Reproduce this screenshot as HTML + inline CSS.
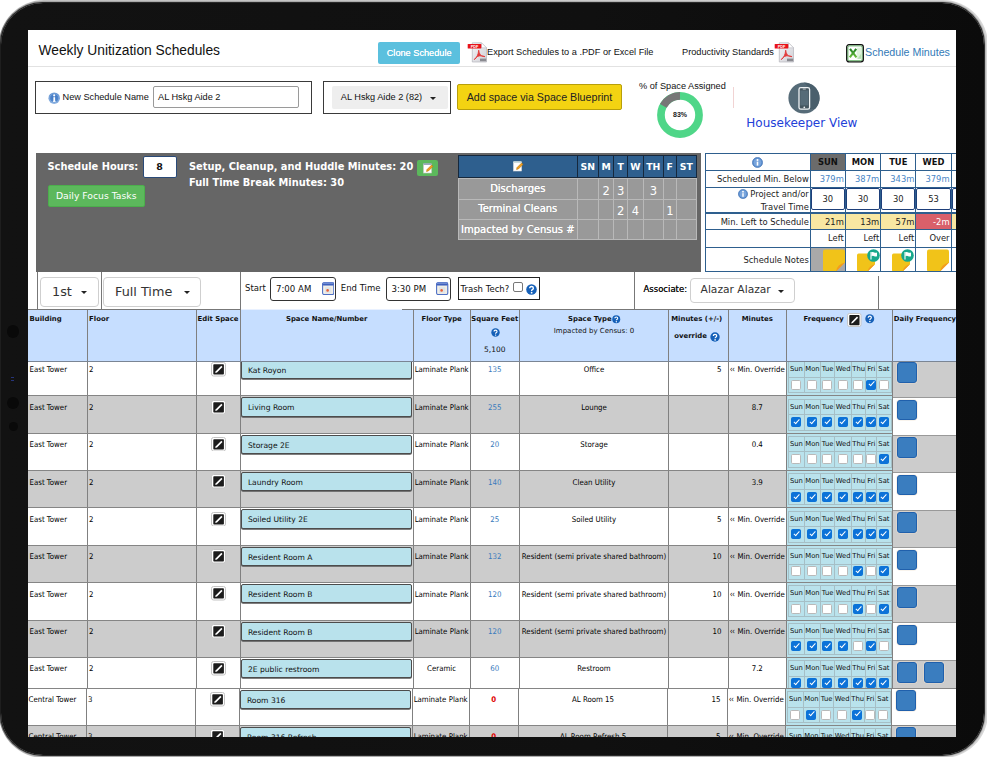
<!DOCTYPE html>
<html lang="en">
<head>
<meta charset="utf-8">
<title>Weekly Unitization Schedules</title>
<style>
html,body{margin:0;padding:0;}
body{width:987px;height:757px;overflow:hidden;background:#fff;position:relative;font-family:"Liberation Sans",sans-serif;color:#222;}
.abs,#inner *{box-sizing:border-box;}
#tablet{position:absolute;left:-1px;top:0;width:988.5px;height:757.5px;border-radius:45px;background:linear-gradient(to right,#777 0,#9a9a9a .5%,#c4c4c4 1.5%,#cdcdcd 50%,#d8d8d8 100%);}
#bezel{position:absolute;left:1.3px;top:3.3px;width:983.2px;height:751.5px;border-radius:42px;background:linear-gradient(to right,#121212 0,#101010 60%,#0b0b0b 100%);box-shadow:0 0 1.3px .4px #0c0c0c;}
#screen{position:absolute;left:28px;top:30px;width:928px;height:707px;overflow:hidden;background:#fff;}
#inner{position:absolute;left:-28px;top:-30px;width:987px;height:757px;}
#inner div,#inner span,#inner svg,#inner i{position:absolute;display:block;}
.dv{font-family:"DejaVu Sans",sans-serif;}
.nw{white-space:nowrap;}
/* top bar */
#title{left:38.5px;top:42px;font-size:13.8px;line-height:17px;color:#111;white-space:nowrap;}
#hr1{left:28px;top:66px;width:928px;height:1px;background:#e2e2e2;}
#clone{left:378.4px;top:41.5px;width:81.5px;height:22px;text-shadow:0 0 .4px #fff;background:#5bc0de;border-radius:2px;color:#fff;font-size:9.2px;line-height:22px;text-align:center;white-space:nowrap;}
.t9{font-size:9.2px;line-height:12px;white-space:nowrap;color:#111;}
#schedmin{left:865px;top:45.5px;font-size:10.7px;line-height:13px;color:#337ab7;white-space:nowrap;}
/* row 2 */
.box{border:1.5px solid #3a3a3a;background:#fff;}
#nsn-input{left:153px;top:86px;width:146px;height:22px;border:1px solid #9a9a9a;border-radius:2px;background:#fff;font-size:9.2px;line-height:20px;padding-left:4px;white-space:nowrap;color:#111;}
#dd1{left:331.8px;top:86px;width:116.5px;height:23px;background:#eeeeee;border-radius:2px;font-size:9.2px;line-height:23px;white-space:nowrap;color:#111;}
#addspace{left:457px;top:84px;width:165px;height:26px;background:#f3d312;border:1px solid #b89f0a;border-radius:2px;font-size:10.7px;line-height:24px;text-align:center;color:#222;white-space:nowrap;}
#hkv{left:746.3px;top:115.8px;font-size:12px;line-height:15px;color:#2240d8;white-space:nowrap;}

/* panel */
.pb{font-size:9.85px;font-weight:bold;color:#fff;line-height:13px;white-space:nowrap;}
#dt{left:457.8px;top:154.8px;width:239px;height:84px;background:#1c2b3c;}
#inner .dh{top:0;height:23px;background:#2e5f8e;border:1px solid #16283c;color:#fff;font-size:9.3px;font-weight:bold;line-height:21px;text-align:center;margin-right:-1px;}
#inner .dh{width:auto;}
#inner .dc{background:#999;border:1px solid #b9b9b9;color:#fff;text-align:center;white-space:nowrap;overflow:hidden;}
#inner .dl{font-size:10px;text-shadow:0 0 .6px #fff;}
#inner .dn{font-size:11.5px;}
/* right table */
#rt{left:705px;top:152.5px;width:300px;height:120px;font-size:8.4px;color:#222;}
#inner .rc{border:1px solid #2e5f8e;background:#fff;white-space:nowrap;overflow:hidden;}
#inner .rl{text-align:right;line-height:16px;padding-right:1px;}
#inner .rc svg.inf{position:static;display:inline;}
#inner .ti{left:0;top:0;right:0;height:22.3px;border:1.5px solid #1d3f7a;border-radius:2px;background:#fff;text-align:center;line-height:20px;font-size:8.4px;}

/* toolbar */
#inner .vl{width:1px;background:#777;}
#inner .btnw{border:1px solid #cfcfcf;border-radius:4px;background:#fff;color:#333;line-height:28px;white-space:nowrap;}
#inner .caret{width:0;height:0;border-left:3.5px solid transparent;border-right:3.5px solid transparent;border-top:3.5px solid #222;}
#inner .tl{font-size:8.5px;line-height:11px;color:#111;white-space:nowrap;}
#inner .tin{border:1px solid #333;border-radius:3px;background:#fff;font-size:8.6px;line-height:22px;color:#111;white-space:nowrap;}

/* grid */
#grid{left:0;top:0;width:987px;height:757px;font-size:7px;color:#111;}
#inner .row{left:0;width:987px;overflow:hidden;border-top:1px solid #858585;}
#inner .row>*{margin-top:-1px;}
#inner .cb{top:0;width:1px;height:60px;background:#808080;}
#inner .ct{top:7.4px;color:#000;line-height:10px;font-family:"DejaVu Sans Condensed","DejaVu Sans",sans-serif;font-size:7.8px;white-space:nowrap;}
#inner .c{text-align:center;}
#inner .r{text-align:right;}
#inner .lq{position:static;display:inline;font-size:8px;letter-spacing:-.6px;margin-right:3.2px;line-height:0;}
#inner .sn{background:#b9e2ec;border:1px solid #4c4c4c;border-radius:2px;font-size:7.6px;line-height:19.2px;white-space:nowrap;box-shadow:0 .7px 0 #555;}
#inner .fq{background:#b9e2ec;border-left:1px solid #808080;border-right:1px solid #808080;}
#inner .fc{border:1px solid #a6bfc6;font-size:6.8px;line-height:15.8px;color:#111;text-align:center;white-space:nowrap;}
#inner .ck{width:10px;height:10px;border:1px solid #b9b9b9;border-radius:1.6px;background:#fff;}
#inner .ck.on{background:#0b72d8;border-color:#0b72d8;}
#inner .ck.on:after{content:"";position:absolute;left:2.5px;top:-.2px;width:2.3px;height:5.3px;border:solid #fff;border-width:0 1.8px 1.8px 0;transform:rotate(42deg);}
#inner .df{border-left:0;}
#inner .dfc{border-top:1px solid #999;}
#inner .sq{width:20.3px;height:20.6px;background:#3a7dbf;border:1px solid #2060ac;border-radius:3px;box-shadow:0 0 0 .6px rgba(240,225,205,.7);}
#gh{left:0;top:309px;width:987px;height:53px;background:#c6deff;border-top:1px solid #777;border-bottom:1px solid #7a8594;overflow:hidden;left:28px;width:930px;}
#inner #gh>*{margin-left:-28px;}
#inner .hb{font-weight:bold;font-size:6.9px;line-height:9px;white-space:nowrap;color:#111;}
#inner .hn{font-size:7px;line-height:9px;white-space:nowrap;color:#111;}
.cam{position:absolute;border-radius:50%;background:#090909;}
</style>
</head>
<body>
<div id="tablet" class="abs"></div><div id="bezel" class="abs"></div>
<div class="abs cam" style="left:6.8px;top:325px;width:12.6px;height:12.6px;"></div>
<div class="abs cam" style="left:6.8px;top:396.7px;width:12.6px;height:12.6px;"></div>
<div class="abs cam" style="left:8.6px;top:422.3px;width:9px;height:9px;"></div>
<div class="abs" style="position:absolute;left:11.3px;top:377.3px;width:2.6px;height:1.2px;background:#26347a;"></div>
<div class="abs" style="position:absolute;left:11.3px;top:380.3px;width:2.6px;height:1.2px;background:#26347a;"></div>
<div id="screen" class="abs"><div id="inner">

<!-- ===== top bar ===== -->
<div id="title">Weekly Unitization Schedules</div>
<div id="hr1"></div>
<div id="clone">Clone Schedule</div>
<div class="t9" style="left:487px;top:45.5px;">Export Schedules to a .PDF or Excel File</div>
<div class="t9" style="left:682px;top:45.5px;">Productivity Standards</div>
<div id="schedmin">Schedule Minutes</div>

<!-- ===== name row ===== -->
<div class="box" style="left:35px;top:80.6px;width:276.5px;height:33.2px;"></div>
<div class="t9" style="left:62.5px;top:91px;">New Schedule Name</div>
<div id="nsn-input">AL Hskg Aide 2</div>
<div class="box" style="left:322.8px;top:80.6px;width:128.5px;height:33.2px;"></div>
<div id="dd1"><span style="left:9px;top:0;">AL Hskg Aide 2 (82)</span></div>
<div id="addspace">Add space via Space Blueprint</div>
<div class="t9" style="left:639px;top:80px;">% of Space Assigned</div>
<div id="hkv" class="dv">Housekeeper View</div>

<!-- ===== gray panel ===== -->
<div style="left:36px;top:153px;width:664.5px;height:119px;background:#666;"></div>
<div class="dv pb" style="left:47.5px;top:160px;">Schedule Hours:</div>
<div class="dv" style="left:142.5px;top:155.5px;width:34px;height:22px;background:#fff;border:1.5px solid #2a4a78;border-radius:2px;font-size:9.5px;font-weight:bold;line-height:19px;text-align:center;color:#111;">8</div>
<div class="dv pb" style="left:189px;top:160px;">Setup, Cleanup, and Huddle Minutes: 20</div>
<div class="dv pb" style="left:189px;top:175.6px;">Full Time Break Minutes: 30</div>
<div style="left:417px;top:159.5px;width:21px;height:16px;background:#5cb85c;border-radius:2px;"></div>
<svg style="left:422px;top:161.5px;" width="12" height="12" viewBox="0 0 12 12"><rect x="1.5" y="2" width="8" height="9" fill="#fff" stroke="#c9c9c9" stroke-width=".6"/><rect x="1.5" y="1.2" width="8" height="1.8" fill="#9ab"/><path d="M4.5 9.5 L5 7.6 L9.6 3 L11 4.4 L6.4 9 Z" fill="#f0a020" stroke="#b56a00" stroke-width=".5"/></svg>
<div class="dv" style="left:47.5px;top:184.5px;width:97.5px;height:22.5px;background:#5cb85c;border:1px solid #4cae4c;border-radius:2px;color:#fff;font-size:9.25px;line-height:20px;text-align:center;white-space:nowrap;">Daily Focus Tasks</div>

<!-- discharge table -->
<div id="dt" class="dv">
<div class="dh" style="left:0px;width:120px;"></div>
<div class="dh" style="left:119px;width:22px;">SN</div>
<div class="dh" style="left:140px;width:16.5px;">M</div>
<div class="dh" style="left:155.5px;width:14.5px;">T</div>
<div class="dh" style="left:169px;width:17px;">W</div>
<div class="dh" style="left:185px;width:21px;">TH</div>
<div class="dh" style="left:205px;width:14px;">F</div>
<div class="dh" style="left:218px;width:21px;">ST</div>
<div class="dc dl" style="left:0px;top:23px;width:120px;height:22px;line-height:20px;">Discharges</div>
<div class="dc dn" style="left:119px;top:23px;width:22px;height:22px;line-height:25.0px;"></div>
<div class="dc dn" style="left:140px;top:23px;width:16.5px;height:22px;line-height:25.0px;">2</div>
<div class="dc dn" style="left:155.5px;top:23px;width:14.5px;height:22px;line-height:25.0px;">3</div>
<div class="dc dn" style="left:169px;top:23px;width:17px;height:22px;line-height:25.0px;"></div>
<div class="dc dn" style="left:185px;top:23px;width:21px;height:22px;line-height:25.0px;">3</div>
<div class="dc dn" style="left:205px;top:23px;width:14px;height:22px;line-height:25.0px;"></div>
<div class="dc dn" style="left:218px;top:23px;width:21px;height:22px;line-height:25.0px;"></div>
<div class="dc dl" style="left:0px;top:44px;width:120px;height:20.8px;line-height:18.8px;">Terminal Cleans</div>
<div class="dc dn" style="left:119px;top:44px;width:22px;height:20.8px;line-height:23.8px;"></div>
<div class="dc dn" style="left:140px;top:44px;width:16.5px;height:20.8px;line-height:23.8px;"></div>
<div class="dc dn" style="left:155.5px;top:44px;width:14.5px;height:20.8px;line-height:23.8px;">2</div>
<div class="dc dn" style="left:169px;top:44px;width:17px;height:20.8px;line-height:23.8px;">4</div>
<div class="dc dn" style="left:185px;top:44px;width:21px;height:20.8px;line-height:23.8px;"></div>
<div class="dc dn" style="left:205px;top:44px;width:14px;height:20.8px;line-height:23.8px;">1</div>
<div class="dc dn" style="left:218px;top:44px;width:21px;height:20.8px;line-height:23.8px;"></div>
<div class="dc dl" style="left:0px;top:63.8px;width:120px;height:21.2px;line-height:19.2px;">Impacted by Census #</div>
<div class="dc dn" style="left:119px;top:63.8px;width:22px;height:21.2px;line-height:24.2px;"></div>
<div class="dc dn" style="left:140px;top:63.8px;width:16.5px;height:21.2px;line-height:24.2px;"></div>
<div class="dc dn" style="left:155.5px;top:63.8px;width:14.5px;height:21.2px;line-height:24.2px;"></div>
<div class="dc dn" style="left:169px;top:63.8px;width:17px;height:21.2px;line-height:24.2px;"></div>
<div class="dc dn" style="left:185px;top:63.8px;width:21px;height:21.2px;line-height:24.2px;"></div>
<div class="dc dn" style="left:205px;top:63.8px;width:14px;height:21.2px;line-height:24.2px;"></div>
<div class="dc dn" style="left:218px;top:63.8px;width:21px;height:21.2px;line-height:24.2px;"></div>
</div>
<svg style="left:512px;top:160px;" width="12" height="12" viewBox="0 0 12 12"><rect x="1.5" y="2" width="8" height="9" fill="#fff" stroke="#ddd" stroke-width=".6"/><rect x="1.5" y="1.2" width="8" height="1.8" fill="#cdd"/><path d="M4.5 9.5 L5 7.6 L9.6 3 L11 4.4 L6.4 9 Z" fill="#f0a020" stroke="#b56a00" stroke-width=".5"/></svg>

<!-- right summary table -->
<div id="rt" class="dv">
<div class="rc " style="left:0px;top:0px;width:105.8px;height:18px;text-align:center;line-height:18px;"><svg class="inf" style="position:static;vertical-align:-2px" width="11" height="11" viewBox="0 0 10 10"><circle cx="5" cy="5" r="4.6" fill="#5b8fd0" stroke="#3b6cb0" stroke-width=".6"/><circle cx="5" cy="5" r="3.4" fill="#8fb6e6" opacity=".55"/><rect x="4.3" y="4.2" width="1.4" height="3.6" fill="#fff"/><circle cx="5" cy="2.7" r=".9" fill="#fff"/></svg></div>
<div class="rc " style="left:104.8px;top:0px;width:36.000000000000014px;height:18px;text-align:center;font-weight:bold;line-height:16px;font-size:8.4px;color:#111;background:#6b6b6b;">SUN</div>
<div class="rc " style="left:139.8px;top:0px;width:36.39999999999998px;height:18px;text-align:center;font-weight:bold;line-height:16px;font-size:8.4px;color:#111;">MON</div>
<div class="rc " style="left:175.2px;top:0px;width:36.20000000000002px;height:18px;text-align:center;font-weight:bold;line-height:16px;font-size:8.4px;color:#111;">TUE</div>
<div class="rc " style="left:210.4px;top:0px;width:36.19999999999999px;height:18px;text-align:center;font-weight:bold;line-height:16px;font-size:8.4px;color:#111;">WED</div>
<div class="rc " style="left:245.6px;top:0px;width:36.400000000000006px;height:18px;text-align:center;font-weight:bold;line-height:16px;font-size:8.4px;color:#111;"></div>
<div class="rc rl" style="left:0px;top:17px;width:105.8px;height:18.700000000000003px;">Scheduled Min. Below</div>
<div class="rc " style="left:104.8px;top:17px;width:36.000000000000014px;height:18.700000000000003px;text-align:right;color:#4a86c5;line-height:16px;padding-right:1px;">379m</div>
<div class="rc " style="left:139.8px;top:17px;width:36.39999999999998px;height:18.700000000000003px;text-align:right;color:#4a86c5;line-height:16px;padding-right:1px;">387m</div>
<div class="rc " style="left:175.2px;top:17px;width:36.20000000000002px;height:18.700000000000003px;text-align:right;color:#4a86c5;line-height:16px;padding-right:1px;">343m</div>
<div class="rc " style="left:210.4px;top:17px;width:36.19999999999999px;height:18.700000000000003px;text-align:right;color:#4a86c5;line-height:16px;padding-right:1px;">379m</div>
<div class="rc " style="left:245.6px;top:17px;width:36.400000000000006px;height:18.700000000000003px;text-align:right;color:#4a86c5;line-height:16px;padding-right:1px;"></div>
<div class="rc rl" style="left:0px;top:34.7px;width:105.8px;height:26.299999999999997px;line-height:12.6px;padding-top:0px;"><svg class="inf" style="position:static;vertical-align:-2px" width="10" height="10" viewBox="0 0 10 10"><circle cx="5" cy="5" r="4.6" fill="#5b8fd0" stroke="#3b6cb0" stroke-width=".6"/><circle cx="5" cy="5" r="3.4" fill="#8fb6e6" opacity=".55"/><rect x="4.3" y="4.2" width="1.4" height="3.6" fill="#fff"/><circle cx="5" cy="2.7" r=".9" fill="#fff"/></svg> Project and/or<br>Travel Time</div>
<div class="rc " style="left:104.8px;top:34.7px;width:36.000000000000014px;height:26.299999999999997px;"><div class="ti">30</div></div>
<div class="rc " style="left:139.8px;top:34.7px;width:36.39999999999998px;height:26.299999999999997px;"><div class="ti">30</div></div>
<div class="rc " style="left:175.2px;top:34.7px;width:36.20000000000002px;height:26.299999999999997px;"><div class="ti">30</div></div>
<div class="rc " style="left:210.4px;top:34.7px;width:36.19999999999999px;height:26.299999999999997px;"><div class="ti">53</div></div>
<div class="rc " style="left:245.6px;top:34.7px;width:36.400000000000006px;height:26.299999999999997px;"><div class="ti"></div></div>
<div class="rc rl" style="left:0px;top:60px;width:105.8px;height:17.900000000000006px;">Min. Left to Schedule</div>
<div class="rc " style="left:104.8px;top:60px;width:36.000000000000014px;height:17.900000000000006px;text-align:right;line-height:16px;padding-right:1px;background:#f8e7a2;color:#222;">21m</div>
<div class="rc " style="left:139.8px;top:60px;width:36.39999999999998px;height:17.900000000000006px;text-align:right;line-height:16px;padding-right:1px;background:#f8e7a2;color:#222;">13m</div>
<div class="rc " style="left:175.2px;top:60px;width:36.20000000000002px;height:17.900000000000006px;text-align:right;line-height:16px;padding-right:1px;background:#f8e7a2;color:#222;">57m</div>
<div class="rc " style="left:210.4px;top:60px;width:36.19999999999999px;height:17.900000000000006px;text-align:right;line-height:16px;padding-right:1px;background:#d9606a;color:#fff;">-2m</div>
<div class="rc " style="left:245.6px;top:60px;width:36.400000000000006px;height:17.900000000000006px;text-align:right;line-height:16px;padding-right:1px;background:#f8e7a2;color:#222;"></div>
<div class="rc " style="left:0px;top:76.9px;width:105.8px;height:18.39999999999999px;"></div>
<div class="rc " style="left:104.8px;top:76.9px;width:36.000000000000014px;height:18.39999999999999px;text-align:right;line-height:17px;padding-right:1px;color:#222;">Left</div>
<div class="rc " style="left:139.8px;top:76.9px;width:36.39999999999998px;height:18.39999999999999px;text-align:right;line-height:17px;padding-right:1px;color:#222;">Left</div>
<div class="rc " style="left:175.2px;top:76.9px;width:36.20000000000002px;height:18.39999999999999px;text-align:right;line-height:17px;padding-right:1px;color:#222;">Left</div>
<div class="rc " style="left:210.4px;top:76.9px;width:36.19999999999999px;height:18.39999999999999px;text-align:right;line-height:17px;padding-right:1px;color:#222;">Over</div>
<div class="rc " style="left:245.6px;top:76.9px;width:36.400000000000006px;height:18.39999999999999px;text-align:right;line-height:17px;padding-right:1px;color:#222;"></div>
<div class="rc rl" style="left:0px;top:94.3px;width:105.8px;height:25.700000000000003px;line-height:24px;">Schedule Notes</div>
<div class="rc " style="left:104.8px;top:94.3px;width:36.000000000000014px;height:25.700000000000003px;background:#a9a9a9;"><svg style="left:12px;top:1px" width="22" height="23" viewBox="0 0 22 22"><path d="M2 0 H20 Q22 0 22 2 V13 L13 22 H2 Q0 22 0 20 V2 Q0 0 2 0 Z" fill="#f1c319"/><path d="M22 13 L13 22 Q14 15 22 13 Z" fill="#f39a1e"/></svg></div>
<div class="rc " style="left:139.8px;top:94.3px;width:36.39999999999998px;height:25.700000000000003px;"><svg style="left:11px;top:5px" width="18" height="19" viewBox="0 0 22 22"><path d="M2 0 H20 Q22 0 22 2 V13 L13 22 H2 Q0 22 0 20 V2 Q0 0 2 0 Z" fill="#f1c319"/><path d="M22 13 L13 22 Q14 15 22 13 Z" fill="#f39a1e"/></svg><svg style="left:21px;top:1px" width="13" height="13" viewBox="0 0 13 13"><circle cx="6.5" cy="6.5" r="6.3" fill="#18a88c"/><path d="M4 3 V10.4" stroke="#fff" stroke-width="1.1"/><path d="M4.4 3.3 Q6 2.5 7.3 3.4 T10 3.4 V7.2 Q8.6 8 7.3 7.2 T4.4 7.2 Z" fill="#fff"/></svg></div>
<div class="rc " style="left:175.2px;top:94.3px;width:36.20000000000002px;height:25.700000000000003px;"><svg style="left:11px;top:5px" width="18" height="19" viewBox="0 0 22 22"><path d="M2 0 H20 Q22 0 22 2 V13 L13 22 H2 Q0 22 0 20 V2 Q0 0 2 0 Z" fill="#f1c319"/><path d="M22 13 L13 22 Q14 15 22 13 Z" fill="#f39a1e"/></svg><svg style="left:20px;top:1px" width="13" height="13" viewBox="0 0 13 13"><circle cx="6.5" cy="6.5" r="6.3" fill="#18a88c"/><path d="M4 3 V10.4" stroke="#fff" stroke-width="1.1"/><path d="M4.4 3.3 Q6 2.5 7.3 3.4 T10 3.4 V7.2 Q8.6 8 7.3 7.2 T4.4 7.2 Z" fill="#fff"/></svg></div>
<div class="rc " style="left:210.4px;top:94.3px;width:36.19999999999999px;height:25.700000000000003px;"><svg style="left:11px;top:1px" width="22" height="23" viewBox="0 0 22 22"><path d="M2 0 H20 Q22 0 22 2 V13 L13 22 H2 Q0 22 0 20 V2 Q0 0 2 0 Z" fill="#f1c319"/><path d="M22 13 L13 22 Q14 15 22 13 Z" fill="#f39a1e"/></svg></div>
<div class="rc " style="left:245.6px;top:94.3px;width:36.400000000000006px;height:25.700000000000003px;"><svg style="left:11px;top:1px" width="22" height="23" viewBox="0 0 22 22"><path d="M2 0 H20 Q22 0 22 2 V13 L13 22 H2 Q0 22 0 20 V2 Q0 0 2 0 Z" fill="#f1c319"/><path d="M22 13 L13 22 Q14 15 22 13 Z" fill="#f39a1e"/></svg></div>
</div>
<!-- ===== icons ===== -->
<svg style="left:467px;top:42px" width="21" height="21" viewBox="0 0 21 21"><defs><linearGradient id="pg" x1="0" y1="0" x2="1" y2="1"><stop offset="0" stop-color="#f4f4f6"/><stop offset="1" stop-color="#d0d0d6"/></linearGradient></defs><path d="M5.3 .8 H14.5 L19.5 5.8 V20 H5.3 Z" fill="url(#pg)" stroke="#b4b4bc" stroke-width=".7"/><path d="M14.5 .8 V5.8 H19.5 Z" fill="#fff" stroke="#b4b4bc" stroke-width=".5"/><rect x="13" y="16.6" width="6.2" height="2.6" fill="#8a8a90"/><rect x=".7" y="1.9" width="13.6" height="4.6" rx=".6" fill="#e8121a"/><text x="7.5" y="5.7" font-family="Liberation Sans,sans-serif" font-size="3.8" font-weight="bold" fill="#fff" text-anchor="middle">PDF</text><path d="M7.3 17.6 C9.6 16.2 11.4 12.4 11.7 8.2 C11.9 9.8 12.4 11.8 13.4 13 C14.8 14.4 16.6 14.6 18 14.6 C15.6 13.8 12.6 13.4 10.6 14.4 C9 15.2 8 16.6 7.3 17.6 Z" fill="#e23a3a" stroke="#e23a3a" stroke-width=".9" stroke-linejoin="round"/></svg>
<svg style="left:774px;top:42px" width="21" height="21" viewBox="0 0 21 21"><path d="M5.3 .8 H14.5 L19.5 5.8 V20 H5.3 Z" fill="url(#pg)" stroke="#b4b4bc" stroke-width=".7"/><path d="M14.5 .8 V5.8 H19.5 Z" fill="#fff" stroke="#b4b4bc" stroke-width=".5"/><rect x="13" y="16.6" width="6.2" height="2.6" fill="#8a8a90"/><rect x=".7" y="1.9" width="13.6" height="4.6" rx=".6" fill="#e8121a"/><text x="7.5" y="5.7" font-family="Liberation Sans,sans-serif" font-size="3.8" font-weight="bold" fill="#fff" text-anchor="middle">PDF</text><path d="M7.3 17.6 C9.6 16.2 11.4 12.4 11.7 8.2 C11.9 9.8 12.4 11.8 13.4 13 C14.8 14.4 16.6 14.6 18 14.6 C15.6 13.8 12.6 13.4 10.6 14.4 C9 15.2 8 16.6 7.3 17.6 Z" fill="#e23a3a" stroke="#e23a3a" stroke-width=".9" stroke-linejoin="round"/></svg>
<svg style="left:845.8px;top:44.4px" width="18" height="18.6" viewBox="0 0 18 18.6"><defs><linearGradient id="xg" x1="0" y1="0" x2="0" y2="1"><stop offset="0" stop-color="#1f7f22"/><stop offset="1" stop-color="#6cbf3c"/></linearGradient></defs><rect x=".7" y=".7" width="16.6" height="17.2" rx="2.3" fill="#fff" stroke="#0e0e0e" stroke-width="1.3"/><rect x="1.9" y="1.9" width="14.2" height="14.8" rx="1.3" fill="none" stroke="#43a047" stroke-width=".8"/><rect x="10.6" y="3.6" width="5" height="11.6" fill="#dff3dc"/><path d="M11.6 14.8 L15.2 9.6 V14.8 Z" fill="#b7e2b2"/><path d="M4 4.9 L10.4 13.5 M10.2 4.9 L3.8 13.5" stroke="url(#xg)" stroke-width="2.1"/></svg>
<svg style="left:47.5px;top:91.5px" width="12.4" height="12.4" viewBox="0 0 12 12"><defs><radialGradient id="ig" cx=".5" cy=".45" r=".55"><stop offset="0" stop-color="#3f76c2"/><stop offset=".65" stop-color="#4f86cc"/><stop offset="1" stop-color="#9cbce6"/></radialGradient></defs><circle cx="6" cy="6" r="5.6" fill="url(#ig)"/><circle cx="6" cy="6" r="4.4" fill="none" stroke="#a9c6ea" stroke-width=".5" opacity=".8"/><rect x="5.2" y="5" width="1.7" height="4.2" fill="#fff"/><rect x="4.7" y="8.6" width="2.7" height=".9" fill="#fff"/><circle cx="6" cy="3.3" r="1.05" fill="#fff"/></svg>
<!-- donut -->
<svg style="left:656px;top:91px" width="48" height="48" viewBox="-24 -24 48 48"><circle r="19.05" fill="none" stroke="#4fd688" stroke-width="7.7"/><path d="M0 -19.05 A19.05 19.05 0 0 0 -16.66 -9.24" fill="none" stroke="#777" stroke-width="7.7"/><text x="0" y="2.4" font-family="Liberation Sans,sans-serif" font-size="7" font-weight="bold" fill="#222" text-anchor="middle">83%</text></svg>
<div style="left:733px;top:87px;width:1px;height:21px;background:#f1d3d3;"></div>
<!-- phone -->
<svg style="left:788px;top:81.5px" width="32" height="32" viewBox="-16 -16 32 32"><circle r="15.6" fill="#566b78"/><path d="M0 -15.6 A15.6 15.6 0 0 1 11 11 L4 11 L5 -10 Z" fill="#4a5f6c"/><rect x="-5" y="-10.4" width="10.6" height="21.6" rx="1.8" fill="#44555f" stroke="#eef2f4" stroke-width="1.3"/><rect x="-3.7" y="-7.6" width="8" height="15" fill="#566b78"/><circle cx=".3" cy="9.3" r=".9" fill="#eef2f4"/><rect x="-1.2" y="-9.3" width="3" height=".7" fill="#eef2f4"/></svg>
<!-- caret in dd1 -->
<div class="caret" style="left:429.5px;top:96.5px;border-left-width:3px;border-right-width:3px;"></div>
<!-- bezel camera details -->

<!-- ===== toolbar row ===== -->
<div class="vl" style="left:37px;top:272px;height:38px;"></div>
<div class="vl" style="left:101px;top:272px;height:38px;"></div>
<div class="vl" style="left:240px;top:272px;height:38px;"></div>
<div class="vl" style="left:633.5px;top:272px;height:38px;"></div>
<div class="vl" style="left:877.5px;top:276px;height:34px;"></div>
<div style="left:37px;top:308.5px;width:204px;height:1px;background:#666;"></div>
<div class="btnw dv" style="left:39.5px;top:276.5px;width:59px;height:30px;font-size:12.8px;"><span style="left:11.5px;top:0;">1st</span><span class="caret" style="left:40.5px;top:13.5px;"></span></div>
<div class="btnw dv" style="left:103px;top:276.5px;width:97.5px;height:30px;font-size:12.8px;"><span style="left:11px;top:0;">Full Time</span><span class="caret" style="left:79.5px;top:13.5px;"></span></div>
<div class="tl dv" style="left:245px;top:283px;">Start</div>
<div class="tin dv" style="left:269.5px;top:276.5px;width:66px;height:24px;"><span style="left:5.5px;top:0;">7:00 AM</span></div>
<div class="tl dv" style="left:340.8px;top:283px;">End Time</div>
<div class="tin dv" style="left:385.5px;top:276.5px;width:65px;height:24px;"><span style="left:5px;top:0;">3:30 PM</span></div>
<div class="dv" style="left:457.5px;top:276.5px;width:82.5px;height:23.5px;border:1px solid #222;background:#fff;"></div>
<div class="tl dv" style="left:460.5px;top:283.8px;">Trash Tech?</div>
<div style="left:512.5px;top:282px;width:10px;height:10px;border:1px solid #777;border-radius:2px;background:#fff;"></div>
<div class="tl dv" style="left:643.5px;top:283.5px;text-shadow:0 0 .4px #222;">Associate:</div>
<div class="btnw dv" style="left:690px;top:278px;width:104.6px;height:24.5px;font-size:10.7px;line-height:22.5px;"><span style="left:9.6px;top:0;">Alazar Alazar</span><span class="caret" style="left:87px;top:10.5px;"></span></div>
<!-- calendar icons -->
<svg style="left:321.8px;top:282px" width="12.4" height="13.2" viewBox="0 0 12.4 13.2"><rect x=".6" y=".6" width="11.2" height="12" rx="1.6" fill="#e3e7ea" stroke="#4d6fc4" stroke-width="1.1"/><rect x=".6" y=".6" width="11.2" height="3" rx="1" fill="#3f60bd"/><rect x="1" y=".6" width="10.4" height="1" fill="#8fa8e0"/><rect x="1.6" y="4.2" width="9.2" height="7.4" fill="#f3efe6"/><rect x="3" y="5.2" width="6.4" height="5.6" fill="#dfe4e6"/><circle cx="5.6" cy="8.4" r="1.3" fill="#e8603a"/></svg>
<svg style="left:436.3px;top:282px" width="12.4" height="13.2" viewBox="0 0 12.4 13.2"><rect x=".6" y=".6" width="11.2" height="12" rx="1.6" fill="#e3e7ea" stroke="#4d6fc4" stroke-width="1.1"/><rect x=".6" y=".6" width="11.2" height="3" rx="1" fill="#3f60bd"/><rect x="1" y=".6" width="10.4" height="1" fill="#8fa8e0"/><rect x="1.6" y="4.2" width="9.2" height="7.4" fill="#f3efe6"/><rect x="3" y="5.2" width="6.4" height="5.6" fill="#dfe4e6"/><circle cx="5.6" cy="8.4" r="1.3" fill="#e8603a"/></svg>
<svg style="left:526px;top:284.2px" width="11" height="11" viewBox="0 0 10 10"><circle cx="5" cy="5" r="4.8" fill="#1560b8"/><path d="M3.4 3.9 Q3.4 2.3 5 2.3 Q6.7 2.3 6.7 3.8 Q6.7 4.7 5.7 5.2 Q5.1 5.5 5.1 6.3" fill="none" stroke="#fff" stroke-width="1.25"/><circle cx="5.1" cy="7.9" r=".8" fill="#fff"/></svg>

<!-- ===== main grid ===== -->
<div id="grid" class="dv">
<div class="row" style="left:0px;top:358.10px;height:37.95px;background:#fff;">
<div class="cb" style="left:87.0px;"></div>
<div class="cb" style="left:196.0px;"></div>
<div class="cb" style="left:239.5px;"></div>
<div class="cb" style="left:412.8px;"></div>
<div class="cb" style="left:469.5px;"></div>
<div class="cb" style="left:519.0px;"></div>
<div class="cb" style="left:668.0px;"></div>
<div class="cb" style="left:727.5px;"></div>
<div class="ct" style="left:29.5px;">East Tower</div>
<div class="ct" style="left:89.0px;">2</div>
<svg style="left:210.5px;top:4.2px" width="15" height="14.5" viewBox="0 0 15 14.5"><rect x=".5" y=".5" width="14" height="13.5" rx="2" fill="#fff" stroke="#c4c4c4"/><rect x="2.3" y="2.2" width="10.6" height="10.4" rx=".8" fill="#1c1c1c"/><path d="M4.2 11 L4.8 9.2 L10.3 3.7 L11.5 4.9 L6 10.4 Z" fill="#fff"/></svg>
<div class="sn" style="left:241.4px;top:2px;width:170.5px;height:19.1px;"><span style="left:5.5px;top:0;">Kat Royon</span></div>
<div class="ct c" style="left:413.3px;width:56.7px;">Laminate Plank</div>
<div class="ct c" style="left:470px;width:49.5px;color:#3a7bbd;">135</div>
<div class="ct c" style="left:519.5px;width:149.0px;">Office</div>
<div class="ct r" style="left:668.5px;width:53.0px;">5</div>
<div class="ct" style="left:729.8px;"><span class="lq">‹‹</span>Min. Override</div>
<div class="fq" style="left:786.0px;top:1px;width:106.5px;height:37.35px;">
<div class="fc" style="left:0.8px;top:2.2px;width:17.2px;height:16.5px;">Sun</div>
<div class="fc" style="left:0.8px;top:17.7px;width:17.2px;height:16.5px;"><i class="ck" style="left:2.3px;top:1.9px;"></i></div>
<div class="fc" style="left:17.0px;top:2.2px;width:17.0px;height:16.5px;">Mon</div>
<div class="fc" style="left:17.0px;top:17.7px;width:17.0px;height:16.5px;"><i class="ck" style="left:2.2px;top:1.9px;"></i></div>
<div class="fc" style="left:33.0px;top:2.2px;width:15.2px;height:16.5px;">Tue</div>
<div class="fc" style="left:33.0px;top:17.7px;width:15.2px;height:16.5px;"><i class="ck" style="left:1.3px;top:1.9px;"></i></div>
<div class="fc" style="left:47.2px;top:2.2px;width:17.9px;height:16.5px;">Wed</div>
<div class="fc" style="left:47.2px;top:17.7px;width:17.9px;height:16.5px;"><i class="ck" style="left:2.6px;top:1.9px;"></i></div>
<div class="fc" style="left:64.1px;top:2.2px;width:15.2px;height:16.5px;">Thu</div>
<div class="fc" style="left:64.1px;top:17.7px;width:15.2px;height:16.5px;"><i class="ck" style="left:1.3px;top:1.9px;"></i></div>
<div class="fc" style="left:78.3px;top:2.2px;width:12.0px;height:16.5px;">Fri</div>
<div class="fc" style="left:78.3px;top:17.7px;width:12.0px;height:16.5px;"><i class="ck on" style="left:-0.3px;top:1.9px;"></i></div>
<div class="fc" style="left:89.3px;top:2.2px;width:15.3px;height:16.5px;">Sat</div>
<div class="fc" style="left:89.3px;top:17.7px;width:15.3px;height:16.5px;"><i class="ck" style="left:1.4px;top:1.9px;"></i></div>
</div>
</div>
<div class="row" style="left:0px;top:395.45px;height:37.95px;background:#cccccc;">
<div class="cb" style="left:87.0px;"></div>
<div class="cb" style="left:196.0px;"></div>
<div class="cb" style="left:239.5px;"></div>
<div class="cb" style="left:412.8px;"></div>
<div class="cb" style="left:469.5px;"></div>
<div class="cb" style="left:519.0px;"></div>
<div class="cb" style="left:668.0px;"></div>
<div class="cb" style="left:727.5px;"></div>
<div class="ct" style="left:29.5px;">East Tower</div>
<div class="ct" style="left:89.0px;">2</div>
<svg style="left:210.5px;top:4.2px" width="15" height="14.5" viewBox="0 0 15 14.5"><rect x=".5" y=".5" width="14" height="13.5" rx="2" fill="#fff" stroke="#c4c4c4"/><rect x="2.3" y="2.2" width="10.6" height="10.4" rx=".8" fill="#1c1c1c"/><path d="M4.2 11 L4.8 9.2 L10.3 3.7 L11.5 4.9 L6 10.4 Z" fill="#fff"/></svg>
<div class="sn" style="left:241.4px;top:2px;width:170.5px;height:19.1px;"><span style="left:5.5px;top:0;">Living Room</span></div>
<div class="ct c" style="left:413.3px;width:56.7px;">Laminate Plank</div>
<div class="ct c" style="left:470px;width:49.5px;color:#3a7bbd;">255</div>
<div class="ct c" style="left:519.5px;width:149.0px;">Lounge</div>
<div class="ct c" style="left:728px;width:58.5px;">8.7</div>
<div class="fq" style="left:786.0px;top:1px;width:106.5px;height:37.35px;">
<div class="fc" style="left:0.8px;top:2.2px;width:17.2px;height:16.5px;">Sun</div>
<div class="fc" style="left:0.8px;top:17.7px;width:17.2px;height:16.5px;"><i class="ck on" style="left:2.3px;top:1.9px;"></i></div>
<div class="fc" style="left:17.0px;top:2.2px;width:17.0px;height:16.5px;">Mon</div>
<div class="fc" style="left:17.0px;top:17.7px;width:17.0px;height:16.5px;"><i class="ck on" style="left:2.2px;top:1.9px;"></i></div>
<div class="fc" style="left:33.0px;top:2.2px;width:15.2px;height:16.5px;">Tue</div>
<div class="fc" style="left:33.0px;top:17.7px;width:15.2px;height:16.5px;"><i class="ck on" style="left:1.3px;top:1.9px;"></i></div>
<div class="fc" style="left:47.2px;top:2.2px;width:17.9px;height:16.5px;">Wed</div>
<div class="fc" style="left:47.2px;top:17.7px;width:17.9px;height:16.5px;"><i class="ck on" style="left:2.6px;top:1.9px;"></i></div>
<div class="fc" style="left:64.1px;top:2.2px;width:15.2px;height:16.5px;">Thu</div>
<div class="fc" style="left:64.1px;top:17.7px;width:15.2px;height:16.5px;"><i class="ck on" style="left:1.3px;top:1.9px;"></i></div>
<div class="fc" style="left:78.3px;top:2.2px;width:12.0px;height:16.5px;">Fri</div>
<div class="fc" style="left:78.3px;top:17.7px;width:12.0px;height:16.5px;"><i class="ck on" style="left:-0.3px;top:1.9px;"></i></div>
<div class="fc" style="left:89.3px;top:2.2px;width:15.3px;height:16.5px;">Sat</div>
<div class="fc" style="left:89.3px;top:17.7px;width:15.3px;height:16.5px;"><i class="ck on" style="left:1.4px;top:1.9px;"></i></div>
</div>
</div>
<div class="row" style="left:0px;top:432.79px;height:37.95px;background:#fff;">
<div class="cb" style="left:87.0px;"></div>
<div class="cb" style="left:196.0px;"></div>
<div class="cb" style="left:239.5px;"></div>
<div class="cb" style="left:412.8px;"></div>
<div class="cb" style="left:469.5px;"></div>
<div class="cb" style="left:519.0px;"></div>
<div class="cb" style="left:668.0px;"></div>
<div class="cb" style="left:727.5px;"></div>
<div class="ct" style="left:29.5px;">East Tower</div>
<div class="ct" style="left:89.0px;">2</div>
<svg style="left:210.5px;top:4.2px" width="15" height="14.5" viewBox="0 0 15 14.5"><rect x=".5" y=".5" width="14" height="13.5" rx="2" fill="#fff" stroke="#c4c4c4"/><rect x="2.3" y="2.2" width="10.6" height="10.4" rx=".8" fill="#1c1c1c"/><path d="M4.2 11 L4.8 9.2 L10.3 3.7 L11.5 4.9 L6 10.4 Z" fill="#fff"/></svg>
<div class="sn" style="left:241.4px;top:2px;width:170.5px;height:19.1px;"><span style="left:5.5px;top:0;">Storage 2E</span></div>
<div class="ct c" style="left:413.3px;width:56.7px;">Laminate Plank</div>
<div class="ct c" style="left:470px;width:49.5px;color:#3a7bbd;">20</div>
<div class="ct c" style="left:519.5px;width:149.0px;">Storage</div>
<div class="ct c" style="left:728px;width:58.5px;">0.4</div>
<div class="fq" style="left:786.0px;top:1px;width:106.5px;height:37.35px;">
<div class="fc" style="left:0.8px;top:2.2px;width:17.2px;height:16.5px;">Sun</div>
<div class="fc" style="left:0.8px;top:17.7px;width:17.2px;height:16.5px;"><i class="ck" style="left:2.3px;top:1.9px;"></i></div>
<div class="fc" style="left:17.0px;top:2.2px;width:17.0px;height:16.5px;">Mon</div>
<div class="fc" style="left:17.0px;top:17.7px;width:17.0px;height:16.5px;"><i class="ck" style="left:2.2px;top:1.9px;"></i></div>
<div class="fc" style="left:33.0px;top:2.2px;width:15.2px;height:16.5px;">Tue</div>
<div class="fc" style="left:33.0px;top:17.7px;width:15.2px;height:16.5px;"><i class="ck" style="left:1.3px;top:1.9px;"></i></div>
<div class="fc" style="left:47.2px;top:2.2px;width:17.9px;height:16.5px;">Wed</div>
<div class="fc" style="left:47.2px;top:17.7px;width:17.9px;height:16.5px;"><i class="ck" style="left:2.6px;top:1.9px;"></i></div>
<div class="fc" style="left:64.1px;top:2.2px;width:15.2px;height:16.5px;">Thu</div>
<div class="fc" style="left:64.1px;top:17.7px;width:15.2px;height:16.5px;"><i class="ck" style="left:1.3px;top:1.9px;"></i></div>
<div class="fc" style="left:78.3px;top:2.2px;width:12.0px;height:16.5px;">Fri</div>
<div class="fc" style="left:78.3px;top:17.7px;width:12.0px;height:16.5px;"><i class="ck" style="left:-0.3px;top:1.9px;"></i></div>
<div class="fc" style="left:89.3px;top:2.2px;width:15.3px;height:16.5px;">Sat</div>
<div class="fc" style="left:89.3px;top:17.7px;width:15.3px;height:16.5px;"><i class="ck on" style="left:1.4px;top:1.9px;"></i></div>
</div>
</div>
<div class="row" style="left:0px;top:470.14px;height:37.95px;background:#cccccc;">
<div class="cb" style="left:87.0px;"></div>
<div class="cb" style="left:196.0px;"></div>
<div class="cb" style="left:239.5px;"></div>
<div class="cb" style="left:412.8px;"></div>
<div class="cb" style="left:469.5px;"></div>
<div class="cb" style="left:519.0px;"></div>
<div class="cb" style="left:668.0px;"></div>
<div class="cb" style="left:727.5px;"></div>
<div class="ct" style="left:29.5px;">East Tower</div>
<div class="ct" style="left:89.0px;">2</div>
<svg style="left:210.5px;top:4.2px" width="15" height="14.5" viewBox="0 0 15 14.5"><rect x=".5" y=".5" width="14" height="13.5" rx="2" fill="#fff" stroke="#c4c4c4"/><rect x="2.3" y="2.2" width="10.6" height="10.4" rx=".8" fill="#1c1c1c"/><path d="M4.2 11 L4.8 9.2 L10.3 3.7 L11.5 4.9 L6 10.4 Z" fill="#fff"/></svg>
<div class="sn" style="left:241.4px;top:2px;width:170.5px;height:19.1px;"><span style="left:5.5px;top:0;">Laundry Room</span></div>
<div class="ct c" style="left:413.3px;width:56.7px;">Laminate Plank</div>
<div class="ct c" style="left:470px;width:49.5px;color:#3a7bbd;">140</div>
<div class="ct c" style="left:519.5px;width:149.0px;">Clean Utility</div>
<div class="ct c" style="left:728px;width:58.5px;">3.9</div>
<div class="fq" style="left:786.0px;top:1px;width:106.5px;height:37.35px;">
<div class="fc" style="left:0.8px;top:2.2px;width:17.2px;height:16.5px;">Sun</div>
<div class="fc" style="left:0.8px;top:17.7px;width:17.2px;height:16.5px;"><i class="ck on" style="left:2.3px;top:1.9px;"></i></div>
<div class="fc" style="left:17.0px;top:2.2px;width:17.0px;height:16.5px;">Mon</div>
<div class="fc" style="left:17.0px;top:17.7px;width:17.0px;height:16.5px;"><i class="ck on" style="left:2.2px;top:1.9px;"></i></div>
<div class="fc" style="left:33.0px;top:2.2px;width:15.2px;height:16.5px;">Tue</div>
<div class="fc" style="left:33.0px;top:17.7px;width:15.2px;height:16.5px;"><i class="ck on" style="left:1.3px;top:1.9px;"></i></div>
<div class="fc" style="left:47.2px;top:2.2px;width:17.9px;height:16.5px;">Wed</div>
<div class="fc" style="left:47.2px;top:17.7px;width:17.9px;height:16.5px;"><i class="ck on" style="left:2.6px;top:1.9px;"></i></div>
<div class="fc" style="left:64.1px;top:2.2px;width:15.2px;height:16.5px;">Thu</div>
<div class="fc" style="left:64.1px;top:17.7px;width:15.2px;height:16.5px;"><i class="ck on" style="left:1.3px;top:1.9px;"></i></div>
<div class="fc" style="left:78.3px;top:2.2px;width:12.0px;height:16.5px;">Fri</div>
<div class="fc" style="left:78.3px;top:17.7px;width:12.0px;height:16.5px;"><i class="ck on" style="left:-0.3px;top:1.9px;"></i></div>
<div class="fc" style="left:89.3px;top:2.2px;width:15.3px;height:16.5px;">Sat</div>
<div class="fc" style="left:89.3px;top:17.7px;width:15.3px;height:16.5px;"><i class="ck on" style="left:1.4px;top:1.9px;"></i></div>
</div>
</div>
<div class="row" style="left:0px;top:507.48px;height:37.95px;background:#fff;">
<div class="cb" style="left:87.0px;"></div>
<div class="cb" style="left:196.0px;"></div>
<div class="cb" style="left:239.5px;"></div>
<div class="cb" style="left:412.8px;"></div>
<div class="cb" style="left:469.5px;"></div>
<div class="cb" style="left:519.0px;"></div>
<div class="cb" style="left:668.0px;"></div>
<div class="cb" style="left:727.5px;"></div>
<div class="ct" style="left:29.5px;">East Tower</div>
<div class="ct" style="left:89.0px;">2</div>
<svg style="left:210.5px;top:4.2px" width="15" height="14.5" viewBox="0 0 15 14.5"><rect x=".5" y=".5" width="14" height="13.5" rx="2" fill="#fff" stroke="#c4c4c4"/><rect x="2.3" y="2.2" width="10.6" height="10.4" rx=".8" fill="#1c1c1c"/><path d="M4.2 11 L4.8 9.2 L10.3 3.7 L11.5 4.9 L6 10.4 Z" fill="#fff"/></svg>
<div class="sn" style="left:241.4px;top:2px;width:170.5px;height:19.1px;"><span style="left:5.5px;top:0;">Soiled Utility 2E</span></div>
<div class="ct c" style="left:413.3px;width:56.7px;">Laminate Plank</div>
<div class="ct c" style="left:470px;width:49.5px;color:#3a7bbd;">25</div>
<div class="ct c" style="left:519.5px;width:149.0px;">Soiled Utility</div>
<div class="ct r" style="left:668.5px;width:53.0px;">5</div>
<div class="ct" style="left:729.8px;"><span class="lq">‹‹</span>Min. Override</div>
<div class="fq" style="left:786.0px;top:1px;width:106.5px;height:37.35px;">
<div class="fc" style="left:0.8px;top:2.2px;width:17.2px;height:16.5px;">Sun</div>
<div class="fc" style="left:0.8px;top:17.7px;width:17.2px;height:16.5px;"><i class="ck on" style="left:2.3px;top:1.9px;"></i></div>
<div class="fc" style="left:17.0px;top:2.2px;width:17.0px;height:16.5px;">Mon</div>
<div class="fc" style="left:17.0px;top:17.7px;width:17.0px;height:16.5px;"><i class="ck on" style="left:2.2px;top:1.9px;"></i></div>
<div class="fc" style="left:33.0px;top:2.2px;width:15.2px;height:16.5px;">Tue</div>
<div class="fc" style="left:33.0px;top:17.7px;width:15.2px;height:16.5px;"><i class="ck on" style="left:1.3px;top:1.9px;"></i></div>
<div class="fc" style="left:47.2px;top:2.2px;width:17.9px;height:16.5px;">Wed</div>
<div class="fc" style="left:47.2px;top:17.7px;width:17.9px;height:16.5px;"><i class="ck on" style="left:2.6px;top:1.9px;"></i></div>
<div class="fc" style="left:64.1px;top:2.2px;width:15.2px;height:16.5px;">Thu</div>
<div class="fc" style="left:64.1px;top:17.7px;width:15.2px;height:16.5px;"><i class="ck on" style="left:1.3px;top:1.9px;"></i></div>
<div class="fc" style="left:78.3px;top:2.2px;width:12.0px;height:16.5px;">Fri</div>
<div class="fc" style="left:78.3px;top:17.7px;width:12.0px;height:16.5px;"><i class="ck on" style="left:-0.3px;top:1.9px;"></i></div>
<div class="fc" style="left:89.3px;top:2.2px;width:15.3px;height:16.5px;">Sat</div>
<div class="fc" style="left:89.3px;top:17.7px;width:15.3px;height:16.5px;"><i class="ck on" style="left:1.4px;top:1.9px;"></i></div>
</div>
</div>
<div class="row" style="left:0px;top:544.83px;height:37.95px;background:#cccccc;">
<div class="cb" style="left:87.0px;"></div>
<div class="cb" style="left:196.0px;"></div>
<div class="cb" style="left:239.5px;"></div>
<div class="cb" style="left:412.8px;"></div>
<div class="cb" style="left:469.5px;"></div>
<div class="cb" style="left:519.0px;"></div>
<div class="cb" style="left:668.0px;"></div>
<div class="cb" style="left:727.5px;"></div>
<div class="ct" style="left:29.5px;">East Tower</div>
<div class="ct" style="left:89.0px;">2</div>
<svg style="left:210.5px;top:4.2px" width="15" height="14.5" viewBox="0 0 15 14.5"><rect x=".5" y=".5" width="14" height="13.5" rx="2" fill="#fff" stroke="#c4c4c4"/><rect x="2.3" y="2.2" width="10.6" height="10.4" rx=".8" fill="#1c1c1c"/><path d="M4.2 11 L4.8 9.2 L10.3 3.7 L11.5 4.9 L6 10.4 Z" fill="#fff"/></svg>
<div class="sn" style="left:241.4px;top:2px;width:170.5px;height:19.1px;"><span style="left:5.5px;top:0;">Resident Room A</span></div>
<div class="ct c" style="left:413.3px;width:56.7px;">Laminate Plank</div>
<div class="ct c" style="left:470px;width:49.5px;color:#3a7bbd;">132</div>
<div class="ct c" style="left:519.5px;width:149.0px;">Resident (semi private shared bathroom)</div>
<div class="ct r" style="left:668.5px;width:53.0px;">10</div>
<div class="ct" style="left:729.8px;"><span class="lq">‹‹</span>Min. Override</div>
<div class="fq" style="left:786.0px;top:1px;width:106.5px;height:37.35px;">
<div class="fc" style="left:0.8px;top:2.2px;width:17.2px;height:16.5px;">Sun</div>
<div class="fc" style="left:0.8px;top:17.7px;width:17.2px;height:16.5px;"><i class="ck" style="left:2.3px;top:1.9px;"></i></div>
<div class="fc" style="left:17.0px;top:2.2px;width:17.0px;height:16.5px;">Mon</div>
<div class="fc" style="left:17.0px;top:17.7px;width:17.0px;height:16.5px;"><i class="ck" style="left:2.2px;top:1.9px;"></i></div>
<div class="fc" style="left:33.0px;top:2.2px;width:15.2px;height:16.5px;">Tue</div>
<div class="fc" style="left:33.0px;top:17.7px;width:15.2px;height:16.5px;"><i class="ck" style="left:1.3px;top:1.9px;"></i></div>
<div class="fc" style="left:47.2px;top:2.2px;width:17.9px;height:16.5px;">Wed</div>
<div class="fc" style="left:47.2px;top:17.7px;width:17.9px;height:16.5px;"><i class="ck" style="left:2.6px;top:1.9px;"></i></div>
<div class="fc" style="left:64.1px;top:2.2px;width:15.2px;height:16.5px;">Thu</div>
<div class="fc" style="left:64.1px;top:17.7px;width:15.2px;height:16.5px;"><i class="ck on" style="left:1.3px;top:1.9px;"></i></div>
<div class="fc" style="left:78.3px;top:2.2px;width:12.0px;height:16.5px;">Fri</div>
<div class="fc" style="left:78.3px;top:17.7px;width:12.0px;height:16.5px;"><i class="ck" style="left:-0.3px;top:1.9px;"></i></div>
<div class="fc" style="left:89.3px;top:2.2px;width:15.3px;height:16.5px;">Sat</div>
<div class="fc" style="left:89.3px;top:17.7px;width:15.3px;height:16.5px;"><i class="ck on" style="left:1.4px;top:1.9px;"></i></div>
</div>
</div>
<div class="row" style="left:0px;top:582.18px;height:37.95px;background:#fff;">
<div class="cb" style="left:87.0px;"></div>
<div class="cb" style="left:196.0px;"></div>
<div class="cb" style="left:239.5px;"></div>
<div class="cb" style="left:412.8px;"></div>
<div class="cb" style="left:469.5px;"></div>
<div class="cb" style="left:519.0px;"></div>
<div class="cb" style="left:668.0px;"></div>
<div class="cb" style="left:727.5px;"></div>
<div class="ct" style="left:29.5px;">East Tower</div>
<div class="ct" style="left:89.0px;">2</div>
<svg style="left:210.5px;top:4.2px" width="15" height="14.5" viewBox="0 0 15 14.5"><rect x=".5" y=".5" width="14" height="13.5" rx="2" fill="#fff" stroke="#c4c4c4"/><rect x="2.3" y="2.2" width="10.6" height="10.4" rx=".8" fill="#1c1c1c"/><path d="M4.2 11 L4.8 9.2 L10.3 3.7 L11.5 4.9 L6 10.4 Z" fill="#fff"/></svg>
<div class="sn" style="left:241.4px;top:2px;width:170.5px;height:19.1px;"><span style="left:5.5px;top:0;">Resident Room B</span></div>
<div class="ct c" style="left:413.3px;width:56.7px;">Laminate Plank</div>
<div class="ct c" style="left:470px;width:49.5px;color:#3a7bbd;">120</div>
<div class="ct c" style="left:519.5px;width:149.0px;">Resident (semi private shared bathroom)</div>
<div class="ct r" style="left:668.5px;width:53.0px;">10</div>
<div class="ct" style="left:729.8px;"><span class="lq">‹‹</span>Min. Override</div>
<div class="fq" style="left:786.0px;top:1px;width:106.5px;height:37.35px;">
<div class="fc" style="left:0.8px;top:2.2px;width:17.2px;height:16.5px;">Sun</div>
<div class="fc" style="left:0.8px;top:17.7px;width:17.2px;height:16.5px;"><i class="ck" style="left:2.3px;top:1.9px;"></i></div>
<div class="fc" style="left:17.0px;top:2.2px;width:17.0px;height:16.5px;">Mon</div>
<div class="fc" style="left:17.0px;top:17.7px;width:17.0px;height:16.5px;"><i class="ck" style="left:2.2px;top:1.9px;"></i></div>
<div class="fc" style="left:33.0px;top:2.2px;width:15.2px;height:16.5px;">Tue</div>
<div class="fc" style="left:33.0px;top:17.7px;width:15.2px;height:16.5px;"><i class="ck" style="left:1.3px;top:1.9px;"></i></div>
<div class="fc" style="left:47.2px;top:2.2px;width:17.9px;height:16.5px;">Wed</div>
<div class="fc" style="left:47.2px;top:17.7px;width:17.9px;height:16.5px;"><i class="ck" style="left:2.6px;top:1.9px;"></i></div>
<div class="fc" style="left:64.1px;top:2.2px;width:15.2px;height:16.5px;">Thu</div>
<div class="fc" style="left:64.1px;top:17.7px;width:15.2px;height:16.5px;"><i class="ck on" style="left:1.3px;top:1.9px;"></i></div>
<div class="fc" style="left:78.3px;top:2.2px;width:12.0px;height:16.5px;">Fri</div>
<div class="fc" style="left:78.3px;top:17.7px;width:12.0px;height:16.5px;"><i class="ck" style="left:-0.3px;top:1.9px;"></i></div>
<div class="fc" style="left:89.3px;top:2.2px;width:15.3px;height:16.5px;">Sat</div>
<div class="fc" style="left:89.3px;top:17.7px;width:15.3px;height:16.5px;"><i class="ck on" style="left:1.4px;top:1.9px;"></i></div>
</div>
</div>
<div class="row" style="left:0px;top:619.52px;height:37.95px;background:#cccccc;">
<div class="cb" style="left:87.0px;"></div>
<div class="cb" style="left:196.0px;"></div>
<div class="cb" style="left:239.5px;"></div>
<div class="cb" style="left:412.8px;"></div>
<div class="cb" style="left:469.5px;"></div>
<div class="cb" style="left:519.0px;"></div>
<div class="cb" style="left:668.0px;"></div>
<div class="cb" style="left:727.5px;"></div>
<div class="ct" style="left:29.5px;">East Tower</div>
<div class="ct" style="left:89.0px;">2</div>
<svg style="left:210.5px;top:4.2px" width="15" height="14.5" viewBox="0 0 15 14.5"><rect x=".5" y=".5" width="14" height="13.5" rx="2" fill="#fff" stroke="#c4c4c4"/><rect x="2.3" y="2.2" width="10.6" height="10.4" rx=".8" fill="#1c1c1c"/><path d="M4.2 11 L4.8 9.2 L10.3 3.7 L11.5 4.9 L6 10.4 Z" fill="#fff"/></svg>
<div class="sn" style="left:241.4px;top:2px;width:170.5px;height:19.1px;"><span style="left:5.5px;top:0;">Resident Room B</span></div>
<div class="ct c" style="left:413.3px;width:56.7px;">Laminate Plank</div>
<div class="ct c" style="left:470px;width:49.5px;color:#3a7bbd;">120</div>
<div class="ct c" style="left:519.5px;width:149.0px;">Resident (semi private shared bathroom)</div>
<div class="ct r" style="left:668.5px;width:53.0px;">10</div>
<div class="ct" style="left:729.8px;"><span class="lq">‹‹</span>Min. Override</div>
<div class="fq" style="left:786.0px;top:1px;width:106.5px;height:37.35px;">
<div class="fc" style="left:0.8px;top:2.2px;width:17.2px;height:16.5px;">Sun</div>
<div class="fc" style="left:0.8px;top:17.7px;width:17.2px;height:16.5px;"><i class="ck on" style="left:2.3px;top:1.9px;"></i></div>
<div class="fc" style="left:17.0px;top:2.2px;width:17.0px;height:16.5px;">Mon</div>
<div class="fc" style="left:17.0px;top:17.7px;width:17.0px;height:16.5px;"><i class="ck on" style="left:2.2px;top:1.9px;"></i></div>
<div class="fc" style="left:33.0px;top:2.2px;width:15.2px;height:16.5px;">Tue</div>
<div class="fc" style="left:33.0px;top:17.7px;width:15.2px;height:16.5px;"><i class="ck on" style="left:1.3px;top:1.9px;"></i></div>
<div class="fc" style="left:47.2px;top:2.2px;width:17.9px;height:16.5px;">Wed</div>
<div class="fc" style="left:47.2px;top:17.7px;width:17.9px;height:16.5px;"><i class="ck on" style="left:2.6px;top:1.9px;"></i></div>
<div class="fc" style="left:64.1px;top:2.2px;width:15.2px;height:16.5px;">Thu</div>
<div class="fc" style="left:64.1px;top:17.7px;width:15.2px;height:16.5px;"><i class="ck" style="left:1.3px;top:1.9px;"></i></div>
<div class="fc" style="left:78.3px;top:2.2px;width:12.0px;height:16.5px;">Fri</div>
<div class="fc" style="left:78.3px;top:17.7px;width:12.0px;height:16.5px;"><i class="ck on" style="left:-0.3px;top:1.9px;"></i></div>
<div class="fc" style="left:89.3px;top:2.2px;width:15.3px;height:16.5px;">Sat</div>
<div class="fc" style="left:89.3px;top:17.7px;width:15.3px;height:16.5px;"><i class="ck" style="left:1.4px;top:1.9px;"></i></div>
</div>
</div>
<div class="row" style="left:0px;top:656.87px;height:31.90px;background:#fff;">
<div class="cb" style="left:87.0px;"></div>
<div class="cb" style="left:196.0px;"></div>
<div class="cb" style="left:239.5px;"></div>
<div class="cb" style="left:412.8px;"></div>
<div class="cb" style="left:469.5px;"></div>
<div class="cb" style="left:519.0px;"></div>
<div class="cb" style="left:668.0px;"></div>
<div class="cb" style="left:727.5px;"></div>
<div class="ct" style="left:29.5px;">East Tower</div>
<div class="ct" style="left:89.0px;">2</div>
<svg style="left:210.5px;top:4.2px" width="15" height="14.5" viewBox="0 0 15 14.5"><rect x=".5" y=".5" width="14" height="13.5" rx="2" fill="#fff" stroke="#c4c4c4"/><rect x="2.3" y="2.2" width="10.6" height="10.4" rx=".8" fill="#1c1c1c"/><path d="M4.2 11 L4.8 9.2 L10.3 3.7 L11.5 4.9 L6 10.4 Z" fill="#fff"/></svg>
<div class="sn" style="left:241.4px;top:2px;width:170.5px;height:19.1px;"><span style="left:5.5px;top:0;">2E public restroom</span></div>
<div class="ct c" style="left:413.3px;width:56.7px;">Ceramic</div>
<div class="ct c" style="left:470px;width:49.5px;color:#3a7bbd;">60</div>
<div class="ct c" style="left:519.5px;width:149.0px;">Restroom</div>
<div class="ct c" style="left:728px;width:58.5px;">7.2</div>
<div class="fq" style="left:786.0px;top:1px;width:106.5px;height:37.35px;">
<div class="fc" style="left:0.8px;top:2.2px;width:17.2px;height:16.5px;">Sun</div>
<div class="fc" style="left:0.8px;top:17.7px;width:17.2px;height:16.5px;"><i class="ck on" style="left:2.3px;top:1.9px;"></i></div>
<div class="fc" style="left:17.0px;top:2.2px;width:17.0px;height:16.5px;">Mon</div>
<div class="fc" style="left:17.0px;top:17.7px;width:17.0px;height:16.5px;"><i class="ck on" style="left:2.2px;top:1.9px;"></i></div>
<div class="fc" style="left:33.0px;top:2.2px;width:15.2px;height:16.5px;">Tue</div>
<div class="fc" style="left:33.0px;top:17.7px;width:15.2px;height:16.5px;"><i class="ck on" style="left:1.3px;top:1.9px;"></i></div>
<div class="fc" style="left:47.2px;top:2.2px;width:17.9px;height:16.5px;">Wed</div>
<div class="fc" style="left:47.2px;top:17.7px;width:17.9px;height:16.5px;"><i class="ck on" style="left:2.6px;top:1.9px;"></i></div>
<div class="fc" style="left:64.1px;top:2.2px;width:15.2px;height:16.5px;">Thu</div>
<div class="fc" style="left:64.1px;top:17.7px;width:15.2px;height:16.5px;"><i class="ck on" style="left:1.3px;top:1.9px;"></i></div>
<div class="fc" style="left:78.3px;top:2.2px;width:12.0px;height:16.5px;">Fri</div>
<div class="fc" style="left:78.3px;top:17.7px;width:12.0px;height:16.5px;"><i class="ck on" style="left:-0.3px;top:1.9px;"></i></div>
<div class="fc" style="left:89.3px;top:2.2px;width:15.3px;height:16.5px;">Sat</div>
<div class="fc" style="left:89.3px;top:17.7px;width:15.3px;height:16.5px;"><i class="ck on" style="left:1.4px;top:1.9px;"></i></div>
</div>
</div>
<div id="dfcol" style="left:892.8px;top:361px;width:66px;height:327.6px;overflow:hidden;">
<div class="dfc" style="left:0;top:-1.07px;width:66px;height:38.47px;background:#cccccc;">
<i class="sq" style="left:4.2px;top:1.5px;"></i>
</div>
<div class="dfc" style="left:0;top:36.40px;width:66px;height:38.47px;background:#fff;">
<i class="sq" style="left:4.2px;top:1.5px;"></i>
</div>
<div class="dfc" style="left:0;top:73.87px;width:66px;height:38.47px;background:#cccccc;">
<i class="sq" style="left:4.2px;top:1.5px;"></i>
</div>
<div class="dfc" style="left:0;top:111.34px;width:66px;height:38.47px;background:#fff;">
<i class="sq" style="left:4.2px;top:1.5px;"></i>
</div>
<div class="dfc" style="left:0;top:148.81px;width:66px;height:38.47px;background:#cccccc;">
<i class="sq" style="left:4.2px;top:1.5px;"></i>
</div>
<div class="dfc" style="left:0;top:186.28px;width:66px;height:38.47px;background:#fff;">
<i class="sq" style="left:4.2px;top:1.5px;"></i>
</div>
<div class="dfc" style="left:0;top:223.75px;width:66px;height:38.47px;background:#cccccc;">
<i class="sq" style="left:4.2px;top:1.5px;"></i>
</div>
<div class="dfc" style="left:0;top:261.22px;width:66px;height:38.47px;background:#fff;">
<i class="sq" style="left:4.2px;top:1.5px;"></i>
</div>
<div class="dfc" style="left:0;top:298.69px;width:66px;height:38.47px;background:#cccccc;">
<i class="sq" style="left:4.2px;top:1.5px;"></i>
<i class="sq" style="left:31.2px;top:1.5px;"></i>
</div>
</div>
<div class="row" style="left:-1px;top:688.00px;height:37.80px;background:#fff;">
<div class="cb" style="left:87.0px;"></div>
<div class="cb" style="left:196.0px;"></div>
<div class="cb" style="left:239.5px;"></div>
<div class="cb" style="left:412.8px;"></div>
<div class="cb" style="left:469.5px;"></div>
<div class="cb" style="left:519.0px;"></div>
<div class="cb" style="left:668.0px;"></div>
<div class="cb" style="left:727.5px;"></div>
<div class="ct" style="left:29.5px;">Central Tower</div>
<div class="ct" style="left:89.0px;">3</div>
<svg style="left:210.5px;top:4.2px" width="15" height="14.5" viewBox="0 0 15 14.5"><rect x=".5" y=".5" width="14" height="13.5" rx="2" fill="#fff" stroke="#c4c4c4"/><rect x="2.3" y="2.2" width="10.6" height="10.4" rx=".8" fill="#1c1c1c"/><path d="M4.2 11 L4.8 9.2 L10.3 3.7 L11.5 4.9 L6 10.4 Z" fill="#fff"/></svg>
<div class="sn" style="left:241.4px;top:2px;width:170.5px;height:19.1px;"><span style="left:5.5px;top:0;">Room 316</span></div>
<div class="ct c" style="left:413.3px;width:56.7px;">Laminate Plank</div>
<div class="ct c" style="left:470px;width:49.5px;color:#e00000;font-weight:bold;">0</div>
<div class="ct c" style="left:519.5px;width:149.0px;">AL Room 15</div>
<div class="ct r" style="left:668.5px;width:53.0px;">15</div>
<div class="ct" style="left:729.8px;"><span class="lq">‹‹</span>Min. Override</div>
<div class="fq" style="left:786.0px;top:1px;width:106.5px;height:37.35px;">
<div class="fc" style="left:0.8px;top:2.2px;width:17.2px;height:16.5px;">Sun</div>
<div class="fc" style="left:0.8px;top:17.7px;width:17.2px;height:16.5px;"><i class="ck" style="left:2.3px;top:1.9px;"></i></div>
<div class="fc" style="left:17.0px;top:2.2px;width:17.0px;height:16.5px;">Mon</div>
<div class="fc" style="left:17.0px;top:17.7px;width:17.0px;height:16.5px;"><i class="ck on" style="left:2.2px;top:1.9px;"></i></div>
<div class="fc" style="left:33.0px;top:2.2px;width:15.2px;height:16.5px;">Tue</div>
<div class="fc" style="left:33.0px;top:17.7px;width:15.2px;height:16.5px;"><i class="ck" style="left:1.3px;top:1.9px;"></i></div>
<div class="fc" style="left:47.2px;top:2.2px;width:17.9px;height:16.5px;">Wed</div>
<div class="fc" style="left:47.2px;top:17.7px;width:17.9px;height:16.5px;"><i class="ck" style="left:2.6px;top:1.9px;"></i></div>
<div class="fc" style="left:64.1px;top:2.2px;width:15.2px;height:16.5px;">Thu</div>
<div class="fc" style="left:64.1px;top:17.7px;width:15.2px;height:16.5px;"><i class="ck on" style="left:1.3px;top:1.9px;"></i></div>
<div class="fc" style="left:78.3px;top:2.2px;width:12.0px;height:16.5px;">Fri</div>
<div class="fc" style="left:78.3px;top:17.7px;width:12.0px;height:16.5px;"><i class="ck" style="left:-0.3px;top:1.9px;"></i></div>
<div class="fc" style="left:89.3px;top:2.2px;width:15.3px;height:16.5px;">Sat</div>
<div class="fc" style="left:89.3px;top:17.7px;width:15.3px;height:16.5px;"><i class="ck" style="left:1.4px;top:1.9px;"></i></div>
</div>
<div class="df" style="left:892.8px;top:1px;width:70px;height:37.35px;background:#fff;">
<i class="sq" style="left:4.2px;top:1.2px;"></i>
</div>
</div>
<div class="row" style="left:-1px;top:725.10px;height:37.80px;background:#cccccc;">
<div class="cb" style="left:87.0px;"></div>
<div class="cb" style="left:196.0px;"></div>
<div class="cb" style="left:239.5px;"></div>
<div class="cb" style="left:412.8px;"></div>
<div class="cb" style="left:469.5px;"></div>
<div class="cb" style="left:519.0px;"></div>
<div class="cb" style="left:668.0px;"></div>
<div class="cb" style="left:727.5px;"></div>
<div class="ct" style="left:29.5px;">Central Tower</div>
<div class="ct" style="left:89.0px;">3</div>
<svg style="left:210.5px;top:4.2px" width="15" height="14.5" viewBox="0 0 15 14.5"><rect x=".5" y=".5" width="14" height="13.5" rx="2" fill="#fff" stroke="#c4c4c4"/><rect x="2.3" y="2.2" width="10.6" height="10.4" rx=".8" fill="#1c1c1c"/><path d="M4.2 11 L4.8 9.2 L10.3 3.7 L11.5 4.9 L6 10.4 Z" fill="#fff"/></svg>
<div class="sn" style="left:241.4px;top:2px;width:170.5px;height:19.1px;"><span style="left:5.5px;top:0;">Room 316 Refresh</span></div>
<div class="ct c" style="left:413.3px;width:56.7px;">Laminate Plank</div>
<div class="ct c" style="left:470px;width:49.5px;color:#e00000;font-weight:bold;">0</div>
<div class="ct c" style="left:519.5px;width:149.0px;">AL Room Refresh 5</div>
<div class="ct r" style="left:668.5px;width:53.0px;">5</div>
<div class="ct" style="left:729.8px;"><span class="lq">‹‹</span>Min. Override</div>
<div class="fq" style="left:786.0px;top:1px;width:106.5px;height:37.35px;">
<div class="fc" style="left:0.8px;top:2.2px;width:17.2px;height:16.5px;">Sun</div>
<div class="fc" style="left:0.8px;top:17.7px;width:17.2px;height:16.5px;"><i class="ck" style="left:2.3px;top:1.9px;"></i></div>
<div class="fc" style="left:17.0px;top:2.2px;width:17.0px;height:16.5px;">Mon</div>
<div class="fc" style="left:17.0px;top:17.7px;width:17.0px;height:16.5px;"><i class="ck on" style="left:2.2px;top:1.9px;"></i></div>
<div class="fc" style="left:33.0px;top:2.2px;width:15.2px;height:16.5px;">Tue</div>
<div class="fc" style="left:33.0px;top:17.7px;width:15.2px;height:16.5px;"><i class="ck" style="left:1.3px;top:1.9px;"></i></div>
<div class="fc" style="left:47.2px;top:2.2px;width:17.9px;height:16.5px;">Wed</div>
<div class="fc" style="left:47.2px;top:17.7px;width:17.9px;height:16.5px;"><i class="ck" style="left:2.6px;top:1.9px;"></i></div>
<div class="fc" style="left:64.1px;top:2.2px;width:15.2px;height:16.5px;">Thu</div>
<div class="fc" style="left:64.1px;top:17.7px;width:15.2px;height:16.5px;"><i class="ck on" style="left:1.3px;top:1.9px;"></i></div>
<div class="fc" style="left:78.3px;top:2.2px;width:12.0px;height:16.5px;">Fri</div>
<div class="fc" style="left:78.3px;top:17.7px;width:12.0px;height:16.5px;"><i class="ck" style="left:-0.3px;top:1.9px;"></i></div>
<div class="fc" style="left:89.3px;top:2.2px;width:15.3px;height:16.5px;">Sat</div>
<div class="fc" style="left:89.3px;top:17.7px;width:15.3px;height:16.5px;"><i class="ck" style="left:1.4px;top:1.9px;"></i></div>
</div>
<div class="df" style="left:892.8px;top:1px;width:70px;height:37.35px;background:#cccccc;">
<i class="sq" style="left:4.2px;top:1.2px;"></i>
</div>
</div>
<div id="gh">
<div class="cb" style="left:87.0px;"></div>
<div class="cb" style="left:196.0px;"></div>
<div class="cb" style="left:239.5px;"></div>
<div class="cb" style="left:412.8px;"></div>
<div class="cb" style="left:469.5px;"></div>
<div class="cb" style="left:519.0px;"></div>
<div class="cb" style="left:668.0px;"></div>
<div class="cb" style="left:727.5px;"></div>
<div class="cb" style="left:786.0px;"></div>
<div class="cb" style="left:891.5px;"></div>
<div class="hb" style="left:29.6px;top:4.5px;">Building</div>
<div class="hb" style="left:89.1px;top:4.5px;">Floor</div>
<div class="hb" style="left:197.5px;top:4.5px;">Edit Space</div>
<div class="hb c" style="left:240.0px;top:4.5px;width:173.3px;">Space Name/Number</div>
<div class="hb c" style="left:413.3px;top:4.5px;width:56.7px;">Floor Type</div>
<div class="hb c" style="left:470.0px;top:4.5px;width:49.5px;">Square Feet</div>
<svg class="hp" style="left:491px;top:17.6px;width:9px;height:9px;" width="10" height="10" viewBox="0 0 10 10"><circle cx="5" cy="5" r="4.7" fill="#1560b8"/><path d="M3.4 3.9 Q3.4 2.3 5 2.3 Q6.7 2.3 6.7 3.8 Q6.7 4.7 5.7 5.2 Q5.1 5.5 5.1 6.3" fill="none" stroke="#fff" stroke-width="1.25"/><circle cx="5.1" cy="7.9" r=".8" fill="#fff"/></svg>
<div class="hn c" style="left:470.0px;top:35.3px;width:49.5px;font-size:7.5px;">5,100</div>
<div class="hb" style="left:568px;top:4.5px;">Space Type</div>
<svg class="hp" style="left:612.3px;top:5px;width:8.5px;height:8.5px;" width="10" height="10" viewBox="0 0 10 10"><circle cx="5" cy="5" r="4.7" fill="#1560b8"/><path d="M3.4 3.9 Q3.4 2.3 5 2.3 Q6.7 2.3 6.7 3.8 Q6.7 4.7 5.7 5.2 Q5.1 5.5 5.1 6.3" fill="none" stroke="#fff" stroke-width="1.25"/><circle cx="5.1" cy="7.9" r=".8" fill="#fff"/></svg>
<div class="hn c" style="left:519.5px;top:16.8px;width:149.0px;">Impacted by Census: 0</div>
<div class="hb c" style="left:667.0px;top:4.5px;width:59.5px;">Minutes (+/-)</div>
<div class="hb" style="left:674.3px;top:21.5px;">override</div>
<svg class="hp" style="left:709.5px;top:21.5px;" width="10" height="10" viewBox="0 0 10 10"><circle cx="5" cy="5" r="4.7" fill="#1560b8"/><path d="M3.4 3.9 Q3.4 2.3 5 2.3 Q6.7 2.3 6.7 3.8 Q6.7 4.7 5.7 5.2 Q5.1 5.5 5.1 6.3" fill="none" stroke="#fff" stroke-width="1.25"/><circle cx="5.1" cy="7.9" r=".8" fill="#fff"/></svg>
<div class="hb c" style="left:728.0px;top:4.5px;width:58.5px;">Minutes</div>
<div class="hb" style="left:803.5px;top:4.5px;">Frequency</div>
<svg style="left:847.4px;top:2.6px" width="14.6" height="14" viewBox="0 0 15 14.5"><rect x=".5" y=".5" width="14" height="13.5" rx="2" fill="#fff" stroke="#c4c4c4"/><rect x="2.3" y="2.2" width="10.6" height="10.4" rx=".8" fill="#1c1c1c"/><path d="M4.2 11 L4.8 9.2 L10.3 3.7 L11.5 4.9 L6 10.4 Z" fill="#fff"/></svg>
<svg class="hp" style="left:865px;top:4.2px;width:9.5px;height:9.5px;" width="10" height="10" viewBox="0 0 10 10"><circle cx="5" cy="5" r="4.7" fill="#1560b8"/><path d="M3.4 3.9 Q3.4 2.3 5 2.3 Q6.7 2.3 6.7 3.8 Q6.7 4.7 5.7 5.2 Q5.1 5.5 5.1 6.3" fill="none" stroke="#fff" stroke-width="1.25"/><circle cx="5.1" cy="7.9" r=".8" fill="#fff"/></svg>
<div class="hb" style="left:893.8px;top:4.5px;">Daily Frequency</div>
</div>
<div class="hdrstrip" style="left:241px;top:309px;width:161px;height:1px;background:#e9f1ff;"></div>
</div>
</div></div>
</body>
</html>
